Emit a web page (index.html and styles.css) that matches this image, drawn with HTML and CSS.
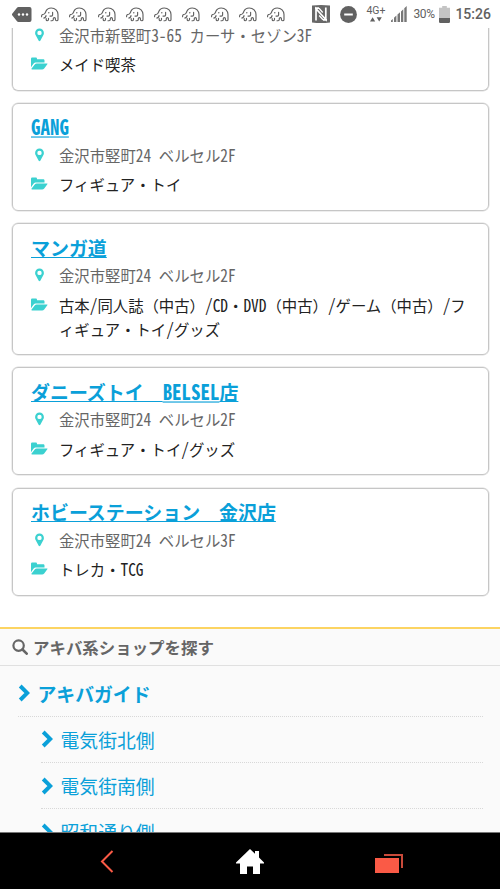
FILE: index.html
```html
<!DOCTYPE html>
<html lang="ja">

<head>
  <meta charset="UTF-8" />
  <meta name="viewport" content="width=device-width, initial-scale=1.0" />
  <title>アキバ系ショップ</title>
  <link rel="stylesheet" href="styles.css">
</head>

<body>
  <!-- アイコン定義 -->
  <svg class="defs" width="0" height="0">
    <symbol id="pin" viewBox="0 0 10 14">
      <path fill-rule="evenodd" d="M5 .5A4.4 4.4 0 0 0 .6 4.9c0 1 .2 1.600.5 2.200l3.100 5.700c.3.6 1.300.6 1.600 0l3.100-5.700c.3-.6.5-1.200.5-2.200A4.400 4.400 0 0 0 5 .5zM5 2.700a2.200 2.200 0 1 1 0 4.400 2.200 2.200 0 0 1 0-4.400z" />
    </symbol>
    <symbol id="folder" viewBox="0 0 17 14">
      <path d="M0 10.300V1.900C0 1 .6.500 1.400.500h3.200C5.500.500 6 1 6 1.900v.3h6.100c.8 0 1.400.5 1.400 1.400v1.900H5.300c-1.200 0-2.200.5-3 1.400z" />
      <path d="M16.300 7.300 13.200 11.400c-.5.6-1.300 1-2.100 1H.9c-.5 0-.7-.4-.3-.9l3.100-4.100c.4-.6 1.200-.9 2-.9H15.900c.6 0 .8.4.4.8z" />
    </symbol>
    <symbol id="chevron" viewBox="0 0 12 18">
      <path d="M2.200 2 9.300 9 2.200 16" fill="none" stroke="currentColor" stroke-width="3.900" />
    </symbol>
    <symbol id="elephant" viewBox="0 0 18 15">
      <path d="M.6 9.800C.4 7.800 1.300 7.300 2.600 7.200 4 7 4.200 6 4.900 4.300 5.800 2.200 7.600 1 10.200 1c4 0 6.800 2.800 6.800 6.600v4.800c0 .9-.5 1.300-1.300 1.300s-1.300-.4-1.300-1.200v-.9c0-.6-.4-1-1-1s-1.100.4-1.100 1v.9c0 .8-.5 1.200-1.300 1.200h-1M5 8.600c-.1 1.500-.8 2.300-2.300 2.400M5.200 11.500v1.200c0 .6.400 1 1.100 1s1.200-.4 1.200-1.100v-1.400M11.600 5.200v2.900c0 .7-.4 1-1.200 1H9" fill="none" stroke="currentColor" stroke-width="1.150" stroke-linecap="round" />
      <circle cx="7.800" cy="5.700" r=".7" fill="currentColor" />
    </symbol>
  </svg>

  <header class="status-bar">
    <svg class="tag-icon" viewBox="0 0 20 15">
      <path d="M6.500 0H17.500a2 2 0 0 1 2 2v11a2 2 0 0 1-2 2H6.500Q5.500 15 4.800 14L0 8V7L4.800 1Q5.500 0 6.500 0z" fill="#616161" />
      <g fill="#fff"><circle cx="7" cy="7.500" r="1.200" /><circle cx="11" cy="7.500" r="1.200" /><circle cx="15" cy="7.500" r="1.200" /></g>
    </svg>
    <div class="elephants">
      <svg><use href="#elephant" /></svg>
      <svg><use href="#elephant" /></svg>
      <svg><use href="#elephant" /></svg>
      <svg><use href="#elephant" /></svg>
      <svg><use href="#elephant" /></svg>
      <svg><use href="#elephant" /></svg>
      <svg><use href="#elephant" /></svg>
      <svg><use href="#elephant" /></svg>
      <svg><use href="#elephant" /></svg>
    </div>
    <svg class="nfc-icon" viewBox="0 0 18 18">
      <path d="M0 .5Q9-.5 18 .5v17Q9 18.500 0 17.500z" fill="#686868" />
      <path d="M4 15.500V3.800L13.800 14.500V2.500M3 3.200h4M11 14.800h4" fill="none" stroke="#fff" stroke-width="1.700" />
      <path d="M7 3.200 10.700 7.500M7.200 10.500 11 14.800" fill="none" stroke="#fff" stroke-width="1.300" />
    </svg>
    <svg class="dnd-icon" viewBox="0 0 17 17">
      <circle cx="8.500" cy="8.500" r="8.400" fill="#616161" />
      <path d="M4.200 8.500h8.600" stroke="#fff" stroke-width="2" />
    </svg>
    <div class="network">
      <span>4G+</span>
      <svg viewBox="0 0 12 5"><path d="M0 4.500 2.600.3 5.200 4.500zM6.600.3h5.200L9.200 4.500z" fill="#616161" /></svg>
    </div>
    <svg class="signal-icon" viewBox="0 0 16 16">
      <path d="M0 16v-1.500L1.800 13v3zM3 16v-4.200L5.400 9.500V16zM6.500 16V8.500L9 6.200V16zM10 16V5.500L12.300 3.200V16zM13.300 16V2.300L15.700 0v16z" fill="#777" />
    </svg>
    <span class="percent">30%</span>
    <svg class="battery-icon" viewBox="0 0 11 17">
      <path d="M3.200 0h4.600v1.800H11V12H0V1.800h3.200z" fill="#c4c4c4" />
      <path d="M0 12h11v3.800q0 1.200-1.200 1.200H1.200Q0 17 0 15.800z" fill="#616161" />
    </svg>
    <span class="clock">15:26</span>
  </header>

  <main class="content">
    <div class="shop-list">
      <article class="shop shop-cut">
        <p class="address"><svg><use href="#pin" /></svg>金沢市新竪町<span class="hw">3-65 </span>カーサ・セゾン<span class="hw">3F</span></p>
        <p class="genre"><svg><use href="#folder" /></svg>メイド喫茶</p>
      </article>

      <article class="shop">
        <h2><a href="#"><span class="hw">GANG</span></a></h2>
        <p class="address"><svg><use href="#pin" /></svg>金沢市竪町<span class="hw">24 </span>ベルセル<span class="hw">2F</span></p>
        <p class="genre"><svg><use href="#folder" /></svg>フィギュア・トイ</p>
      </article>

      <article class="shop">
        <h2><a href="#">マンガ道</a></h2>
        <p class="address"><svg><use href="#pin" /></svg>金沢市竪町<span class="hw">24 </span>ベルセル<span class="hw">2F</span></p>
        <p class="genre"><svg><use href="#folder" /></svg>古本<span class="hw">/</span>同人誌（中古）<span class="hw">/CD</span>・<span class="hw">DVD</span>（中古）<span class="hw">/</span>ゲーム（中古）<span class="hw">/</span>フ<br>ィギュア・トイ<span class="hw">/</span>グッズ</p>
      </article>

      <article class="shop">
        <h2><a href="#">ダニーズトイ　<span class="hw">BELSEL</span>店</a></h2>
        <p class="address"><svg><use href="#pin" /></svg>金沢市竪町<span class="hw">24 </span>ベルセル<span class="hw">2F</span></p>
        <p class="genre"><svg><use href="#folder" /></svg>フィギュア・トイ<span class="hw">/</span>グッズ</p>
      </article>

      <article class="shop">
        <h2><a href="#">ホビーステーション　金沢店</a></h2>
        <p class="address"><svg><use href="#pin" /></svg>金沢市竪町<span class="hw">24 </span>ベルセル<span class="hw">3F</span></p>
        <p class="genre"><svg><use href="#folder" /></svg>トレカ・<span class="hw">TCG</span></p>
      </article>
    </div>

    <section class="finder">
      <h3>
        <svg viewBox="0 0 16 16"><circle cx="6.600" cy="6.600" r="5.200" fill="none" stroke="#666" stroke-width="2.200" /><path d="m10.500 10.500 4.200 4.200" stroke="#666" stroke-width="2.600" stroke-linecap="round" /></svg>
        アキバ系ショップを探す
      </h3>
      <ul>
        <li class="parent"><a href="#"><svg><use href="#chevron" /></svg>アキバガイド</a></li>
        <li class="child"><a href="#"><svg><use href="#chevron" /></svg>電気街北側</a></li>
        <li class="child"><a href="#"><svg><use href="#chevron" /></svg>電気街南側</a></li>
        <li class="child"><a href="#"><svg><use href="#chevron" /></svg>昭和通り側</a></li>
      </ul>
    </section>
  </main>

  <nav class="nav-bar">
    <svg class="back" viewBox="0 0 14 23"><path d="M12.500 1 2 11.500 12.500 22" fill="none" stroke="#fa5a46" stroke-width="2" /></svg>
    <svg class="home" viewBox="0 0 28 25"><path d="M14 0 19 4.800V2h4v6.600L28 13.500V14.500H24V25H17v-7.500h-6V25H4V14.500H0V13.500z" fill="#fff" /></svg>
    <svg class="recent" viewBox="0 0 28 19"><path d="M0 4h24v15H0z" fill="#fa5a46" /><path d="M9 1h18v13" fill="none" stroke="#c94a3a" stroke-width="2" /></svg>
  </nav>
</body>

</html>
```

FILE: styles.css
```css
* {
  box-sizing: border-box;
}

body {
  margin: 0;
  height: 889px;
  display: flex;
  flex-direction: column;
  overflow: hidden;
  background: #fff;
  color: #222;
  font-family: "Noto Sans CJK JP", sans-serif;
  font-size: 15.36px;
}

h2,
h3,
p,
ul {
  margin: 0;
  padding: 0;
}

svg {
  display: block;
  flex: none;
}

a {
  color: #0aa0d9;
}

.defs {
  position: absolute;
}

/* 半角幅の縦長英数字 */
.hw {
  display: inline-block;
  font-feature-settings: "hwid";
  white-space: pre;
  transform: scaleY(1.14);
  transform-origin: 50% 75%;
}

h2 .hw {
  text-decoration: underline;
}

.status-bar {
  flex: none;
  height: 28px;
  padding: 0 9px 0 12px;
  display: flex;
  align-items: center;
  color: #616161;
  font-family: Roboto, sans-serif;
}

.tag-icon {
  width: 20px;
  height: 15px;
}

.elephants {
  display: flex;
  gap: 10.300px;
  margin-left: 9px;
}

.elephants svg {
  width: 18px;
  height: 15px;
}

.nfc-icon {
  width: 18px;
  height: 18px;
  margin-left: 27px;
}

.dnd-icon {
  width: 17px;
  height: 17px;
  margin-left: 10px;
}

.network {
  width: 20px;
  margin: -2px 0 0 9px;
  font-size: 10.500px;
  line-height: 11px;
}

.network svg {
  width: 12px;
  height: 5px;
  margin: 1px 0 0 4px;
}

.signal-icon {
  width: 16px;
  height: 16px;
  margin-left: 5px;
}

.percent {
  width: 23px;
  margin-left: 6px;
  font-size: 12px;
  letter-spacing: -0.3px;
}

.battery-icon {
  width: 11px;
  height: 17px;
  margin-left: 3px;
}

.clock {
  margin-left: 5px;
  font-size: 14px;
  font-weight: 500;
}

.content {
  flex: 1;
  min-height: 0;
  overflow: hidden;
}

.shop-list {
  padding: 0 11.500px 0 12px;
  display: flex;
  flex-direction: column;
  gap: 12.300px;
}

.shop {
  border: 1px solid #c6c6c6;
  border-radius: 6px;
  box-shadow: 0 0 0 0.500px #ddd;
  padding: 10.500px 18px 13.500px;
}

.shop-cut {
  height: 62.500px;
  padding-top: 0;
  border-top: none;
  border-radius: 0 0 6px 6px;
}

.shop h2 {
  font-size: 18.950px;
  line-height: 25px;
  font-weight: 700;
}

.shop p {
  position: relative;
  padding-left: 28px;
  line-height: 24px;
  white-space: nowrap;
}

.shop p svg {
  position: absolute;
  left: 0;
  top: 5px;
  width: 17px;
  height: 14px;
  fill: #3bd1d0;
}

.shop .address {
  margin-top: 3.500px;
  color: #666;
}

.shop-cut .address:first-child {
  margin-top: -5.500px;
}

.shop .genre {
  margin-top: 5.500px;
}

.finder {
  margin-top: 31px;
  border-top: 2px solid #fcd462;
  background: #fafafa;
  height: 240px;
}

.finder h3 {
  height: 37px;
  padding-left: 12px;
  display: flex;
  align-items: center;
  gap: 5px;
  border-bottom: 1px solid #e0e0e0;
  color: #666;
  font-size: 16.450px;
}

.finder h3 svg {
  width: 16px;
  height: 16px;
}

.finder ul {
  padding: 5px 17px 0 18px;
  list-style: none;
}

.finder li {
  height: 46.200px;
  border-bottom: 1px dotted #d8d8d8;
  font-size: 18.850px;
}

.finder a {
  height: 100%;
  display: flex;
  align-items: center;
  gap: 7.500px;
  text-decoration: none;
}

.finder a svg {
  width: 12px;
  height: 18px;
}

.parent {
  font-weight: 700;
}

.child {
  margin-left: 23px;
}

.nav-bar {
  flex: none;
  height: 57px;
  display: flex;
  align-items: center;
  border-top: 1px solid #777;
  background: #000;
}

.back {
  width: 14px;
  height: 23px;
  margin-left: 100px;
}

.home {
  width: 28px;
  height: 25px;
  margin-left: 122px;
}

.recent {
  width: 28px;
  height: 19px;
  margin-left: 111px;
  margin-top: 4px;
}
```
